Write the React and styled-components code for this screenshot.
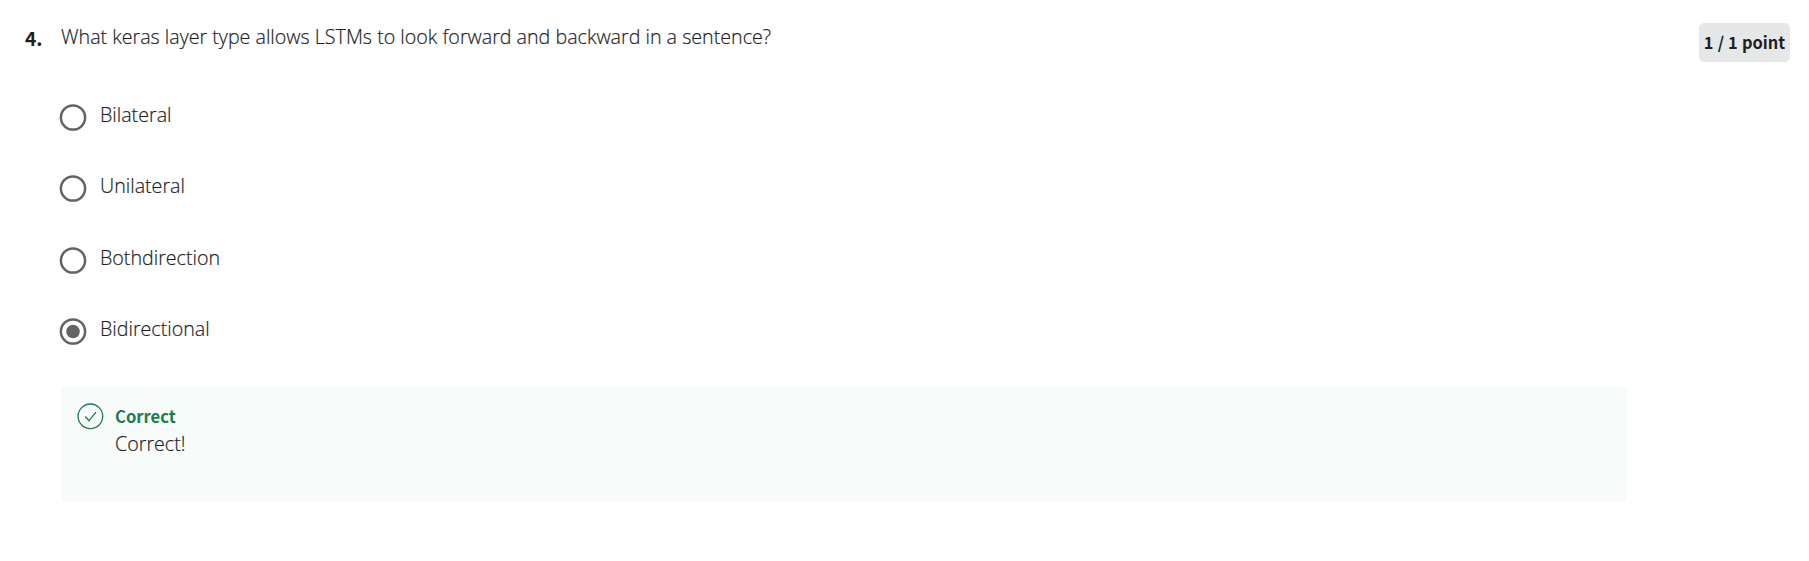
import React from "react";
import styled, { createGlobalStyle } from "styled-components";

const GlobalStyle = createGlobalStyle`
  * { box-sizing: border-box; }
  body {
    margin: 0;
    background: #fff;
    color: #1f1f1f;
    font-family: "Open Sans", "Noto Sans", sans-serif;
    font-weight: 300;
    font-size: 19.66px;
    line-height: 28px;
  }
`;

const strongFamily = `"Noto Sans CJK SC", "Open Sans", sans-serif`;

const Page = styled.main`
  display: grid;
  grid-template-columns: 36px 1566px 91px;
  column-gap: 0;
  padding: 23px 19px 0 25px;
  justify-content: start;
  height: 561px;
`;

const QuestionNumber = styled.div`
  font-family: ${strongFamily};
  font-weight: 700;
  font-size: 19.2px;
  line-height: 30px;
`;

const Body = styled.section`
  display: flex;
  flex-direction: column;
  -webkit-text-stroke: 0.2px currentColor;
`;

const Prompt = styled.p`
  margin: 0;
  white-space: nowrap;
`;

const Points = styled.div`
  display: flex;
  align-items: center;
  justify-content: center;
  margin-left: 72px;
  width: 91px;
  height: 39px;
  padding-bottom: 1px;
  border-radius: 5px;
  background: #e5e7e8;
  font-family: ${strongFamily};
  font-weight: 700;
  font-size: 16.4px;
  word-spacing: 0.4px;
  white-space: nowrap;
`;

const Options = styled.div`
  display: flex;
  flex-direction: column;
  gap: 43.5px;
  margin-top: 49.9px;
`;

const Option = styled.label`
  display: flex;
  align-items: flex-start;
  height: 28px;
`;

const RadioIcon = styled.svg`
  width: 28px;
  height: 28px;
  margin: 2px 13px 0 -2px;
  flex: none;
`;

const Feedback = styled.div`
  display: flex;
  width: 1566px;
  height: 115px;
  margin-top: 43.6px;
  padding: 15px 16px;
  background: #f7fbf9;
`;

const CheckIcon = styled.svg`
  width: 28px;
  height: 28px;
  margin-right: 10px;
  flex: none;
`;

const FeedbackTitle = styled.div`
  font-family: ${strongFamily};
  font-weight: 700;
  font-size: 16.6px;
  line-height: 29px;
  -webkit-text-stroke: 0;
  color: #1d7c50;
`;

const FeedbackText = styled.div`
  line-height: 26px;
`;

const choices = ["Bilateral", "Unilateral", "Bothdirection", "Bidirectional"];
const selected = "Bidirectional";

function Radio({ checked }) {
  return (
    <RadioIcon viewBox="0 0 28 28" role="img">
      <circle cx="14" cy="14.5" r="12.1" fill="none" stroke="#636363" strokeWidth="2.5" />
      {checked && <circle cx="14" cy="14.5" r="6.8" fill="#636363" />}
    </RadioIcon>
  );
}

export default function App() {
  return (
    <>
      <GlobalStyle />
      <Page>
        <QuestionNumber>4.</QuestionNumber>
        <Body>
          <Prompt>What keras layer type allows LSTMs to look forward and backward in a sentence?</Prompt>
          <Options>
            {choices.map((choice) => (
              <Option key={choice}>
                <Radio checked={choice === selected} />
                {choice}
              </Option>
            ))}
          </Options>
          <Feedback>
            <CheckIcon viewBox="0 0 28 28">
              <circle cx="13.4" cy="14.3" r="12.3" fill="none" stroke="#1d7c50" strokeWidth="1.3" />
              <path d="M8.2 14.5 L12 18.8 L19 10.2" fill="none" stroke="#1d7c50" strokeWidth="1.3" />
            </CheckIcon>
            <div>
              <FeedbackTitle>Correct</FeedbackTitle>
              <FeedbackText>Correct!</FeedbackText>
            </div>
          </Feedback>
        </Body>
        <Points>1 / 1 point</Points>
      </Page>
    </>
  );
}
